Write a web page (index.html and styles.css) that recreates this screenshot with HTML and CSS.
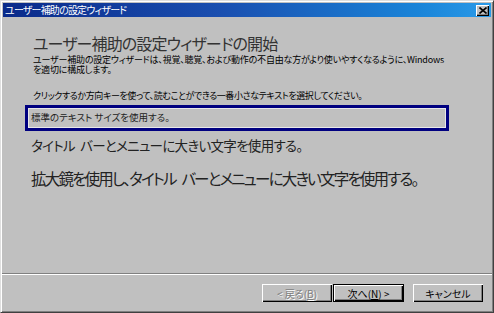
FILE: index.html
```html
<!DOCTYPE html>
<html lang="ja">
<head>
    <meta charset="UTF-8">
    <title>ユーザー補助の設定ウィザード</title>
    <link rel="stylesheet" href="styles.css">
</head>
<body>
    <div class="window">
        <div class="titlebar">
            <span class="title">ユーザー補助の設定ウィザード</span>
            <button class="close" type="button" aria-label="閉じる">
                <svg width="8" height="7" viewBox="0 0 8 7">
                    <path d="M0.5 0.5 L7.5 6.5 M7.5 0.5 L0.5 6.5" stroke="#000" stroke-width="1.6" fill="none"/>
                </svg>
            </button>
        </div>

        <div class="content">
            <h1 class="heading">ユーザー補助の設定ウィザードの開始</h1>
            <div class="desc">
                <span class="desc-line">ユーザー補助の設定ウィザードは、視覚、聴覚、および動作の不自由な方がより使いやすくなるように、Windows</span>
                <span class="desc-line">を適切に構成します。</span>
            </div>
            <p class="hint">クリックするか方向キーを使って、読むことができる一番小さなテキストを選択してください。</p>

            <div class="option option-small selected">標準のテキスト サイズを使用する。</div>
            <div class="option option-medium">タイトル バーとメニューに大きい文字を使用する。</div>
            <div class="option option-large">拡大鏡を使用し、タイトル バーとメニューに大きい文字を使用する。</div>
        </div>

        <div class="separator"></div>

        <div class="buttons">
            <button class="btn" type="button" disabled>&lt; 戻る(<u>B</u>)</button>
            <button class="btn btn-default" type="button">次へ(<u>N</u>) &gt;</button>
            <button class="btn btn-cancel" type="button">キャンセル</button>
        </div>
    </div>
</body>
</html>
```

FILE: styles.css
```css
html, body {
    margin: 0;
    padding: 0;
    background-color: #c0c0c0;
    font-family: "Noto Sans CJK JP", "Liberation Sans", sans-serif;
    font-feature-settings: "palt";
}

.window {
    height: 313px;
    box-sizing: border-box;
    display: flex;
    flex-direction: column;
    border: 1px solid;
    border-color: #dfdfdf #404040 #404040 #dfdfdf;
    box-shadow: inset 1px 1px #fff, inset -1px -1px #808080;
    padding: 2px;
}

.titlebar {
    height: 14px;
    display: flex;
    align-items: center;
    justify-content: space-between;
    background: linear-gradient(to right, #0a2a8a 0%, #1a4fb0 45%, #1a84d8 85%, #2a9ae8 100%);
    padding: 0 2px 0 2px;
}

.title {
    color: #fff;
    font-size: 10px;
    line-height: 14px;
    letter-spacing: -0.8px;
}

.close {
    width: 13px;
    height: 11px;
    padding: 0;
    display: flex;
    align-items: center;
    justify-content: center;
    background-color: #c0c0c0;
    border: none;
    box-shadow: inset 1px 1px #fff, inset -1px -1px #000, inset -2px -2px #808080;
}

.content {
    flex: 1;
    padding: 0 0 0 22px;
    color: #000;
    white-space: nowrap;
}

.heading {
    margin: 16px 0 0 8px;
    font-size: 16px;
    line-height: 20px;
    font-weight: normal;
    letter-spacing: -0.9px;
    color: #333;
}

.desc {
    margin: 1px 0 0 8px;
    font-size: 9px;
    letter-spacing: -0.2px;
}

.desc-line {
    display: block;
    height: 10px;
    line-height: 11px;
}

.hint {
    margin: 16px 0 0 8px;
    font-size: 9px;
    line-height: 11px;
    letter-spacing: -0.4px;
}

.option {
    padding-left: 6px;
    color: #222;
}

.option-small {
    margin-top: 4px;
    font-size: 9.5px;
    line-height: 18px;
}

.selected {
    width: 424px;
    box-sizing: border-box;
    border: 3px solid #000080;
    box-shadow: inset 1px 1px #e8e8e8, inset -1px -1px #e8e8e8;
    padding-left: 3px;
    padding-bottom: 2px;
}

.option-medium {
    margin-top: 4px;
    font-size: 13.5px;
    line-height: 20px;
    letter-spacing: -0.7px;
    word-spacing: 3px;
}

.option-large {
    margin-top: 12px;
    font-size: 15.5px;
    line-height: 22px;
    letter-spacing: -1.8px;
    word-spacing: 4px;
}

.separator {
    height: 1px;
    background-color: #808080;
    border-bottom: 1px solid #fff;
    margin: 0 -1px;
}

.buttons {
    display: flex;
    justify-content: flex-end;
    align-items: center;
    padding: 9px 8px 8px 0;
}

.btn {
    width: 70px;
    height: 18px;
    padding: 0;
    background-color: #c0c0c0;
    border: none;
    box-shadow: inset 1px 1px #fff, inset -1px -1px #000, inset -2px -2px #808080;
    font-family: "Noto Sans CJK JP", "Liberation Sans", sans-serif;
    font-feature-settings: "palt";
    font-size: 10px;
    color: #000;
}

.btn:disabled {
    color: #808080;
    text-shadow: 1px 1px #fff;
}

.btn-default {
    margin-left: 1px;
    border: 1px solid #000;
    width: 71px;
}

.btn-cancel {
    margin-left: 9px;
}
```
